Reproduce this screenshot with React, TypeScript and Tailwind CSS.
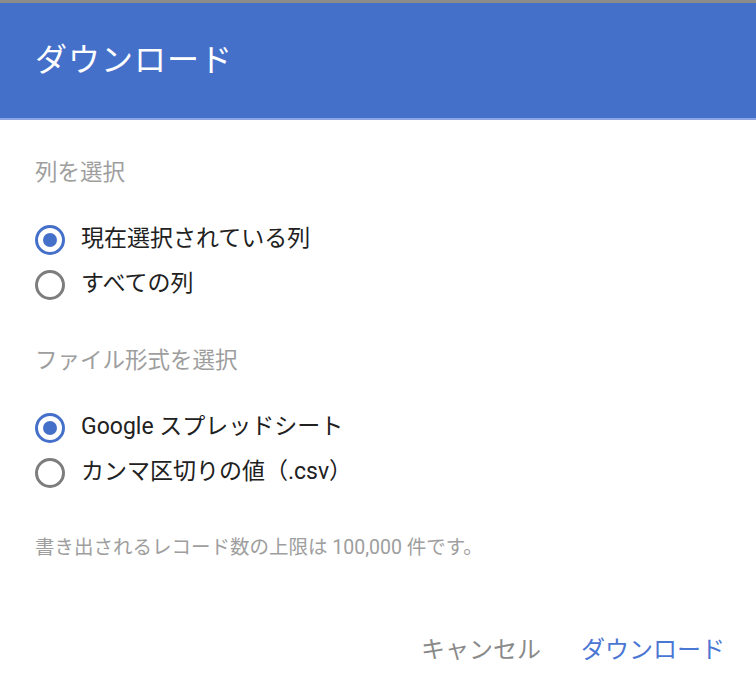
import { useState } from "react";

const font = { fontFamily: "Roboto, 'Noto Sans CJK JP', 'Noto Sans', sans-serif" };

function Radio({ checked, label, onClick }: { checked: boolean; label: string; onClick: () => void }) {
  return (
    <div className="flex h-[45px] items-center cursor-pointer" onClick={onClick}>
      <div
        className={
          checked
            ? "flex h-[30px] w-[30px] items-center justify-center rounded-full border-[3px] border-[#4570ca]"
            : "flex h-[30px] w-[30px] items-center justify-center rounded-full border-[3px] border-[#7d7d7d]"
        }
      >
        {checked && <div className="h-[14px] w-[14px] rounded-full bg-[#4570ca]" />}
      </div>
      <span className="ml-[16px] text-[23px] text-[#212121]">{label}</span>
    </div>
  );
}

export default function App() {
  const [cols, setCols] = useState(0);
  const [fmt, setFmt] = useState(0);

  return (
    <div className="w-[756px] h-[696px] bg-white overflow-hidden" style={font}>
      <div className="h-[3px] bg-[#8c8c8c]" />
      <div className="flex h-[115px] items-center bg-[#4570ca] pl-[35px] pb-[2px]">
        <span className="text-[32px] text-white tracking-[1px]">ダウンロード</span>
      </div>
      <div className="h-[2px] bg-[#8ba6e2]" />

      <div className="pl-[35px]">
        <div className="mt-[37px] text-[22.5px] leading-[30px] text-[#9e9e9e]">列を選択</div>
        <div className="mt-[30px]">
          <Radio checked={cols === 0} label="現在選択されている列" onClick={() => setCols(0)} />
          <Radio checked={cols === 1} label="すべての列" onClick={() => setCols(1)} />
        </div>

        <div className="mt-[38px] text-[22.5px] leading-[30px] text-[#9e9e9e]">ファイル形式を選択</div>
        <div className="mt-[30px]">
          <Radio checked={fmt === 0} label="Google スプレッドシート" onClick={() => setFmt(0)} />
          <Radio checked={fmt === 1} label="カンマ区切りの値（.csv）" onClick={() => setFmt(1)} />
        </div>

        <div className="mt-[40px] text-[19.5px] leading-[26px] text-[#9e9e9e]">
          書き出されるレコード数の上限は 100,000 件です。
        </div>
      </div>

      <div className="mt-[72px] flex justify-end gap-[40px] pr-[31px] text-[24px] leading-[34px]">
        <button className="text-[#8a8a8a]">キャンセル</button>
        <button className="text-[#4a76d4]">ダウンロード</button>
      </div>
    </div>
  );
}
